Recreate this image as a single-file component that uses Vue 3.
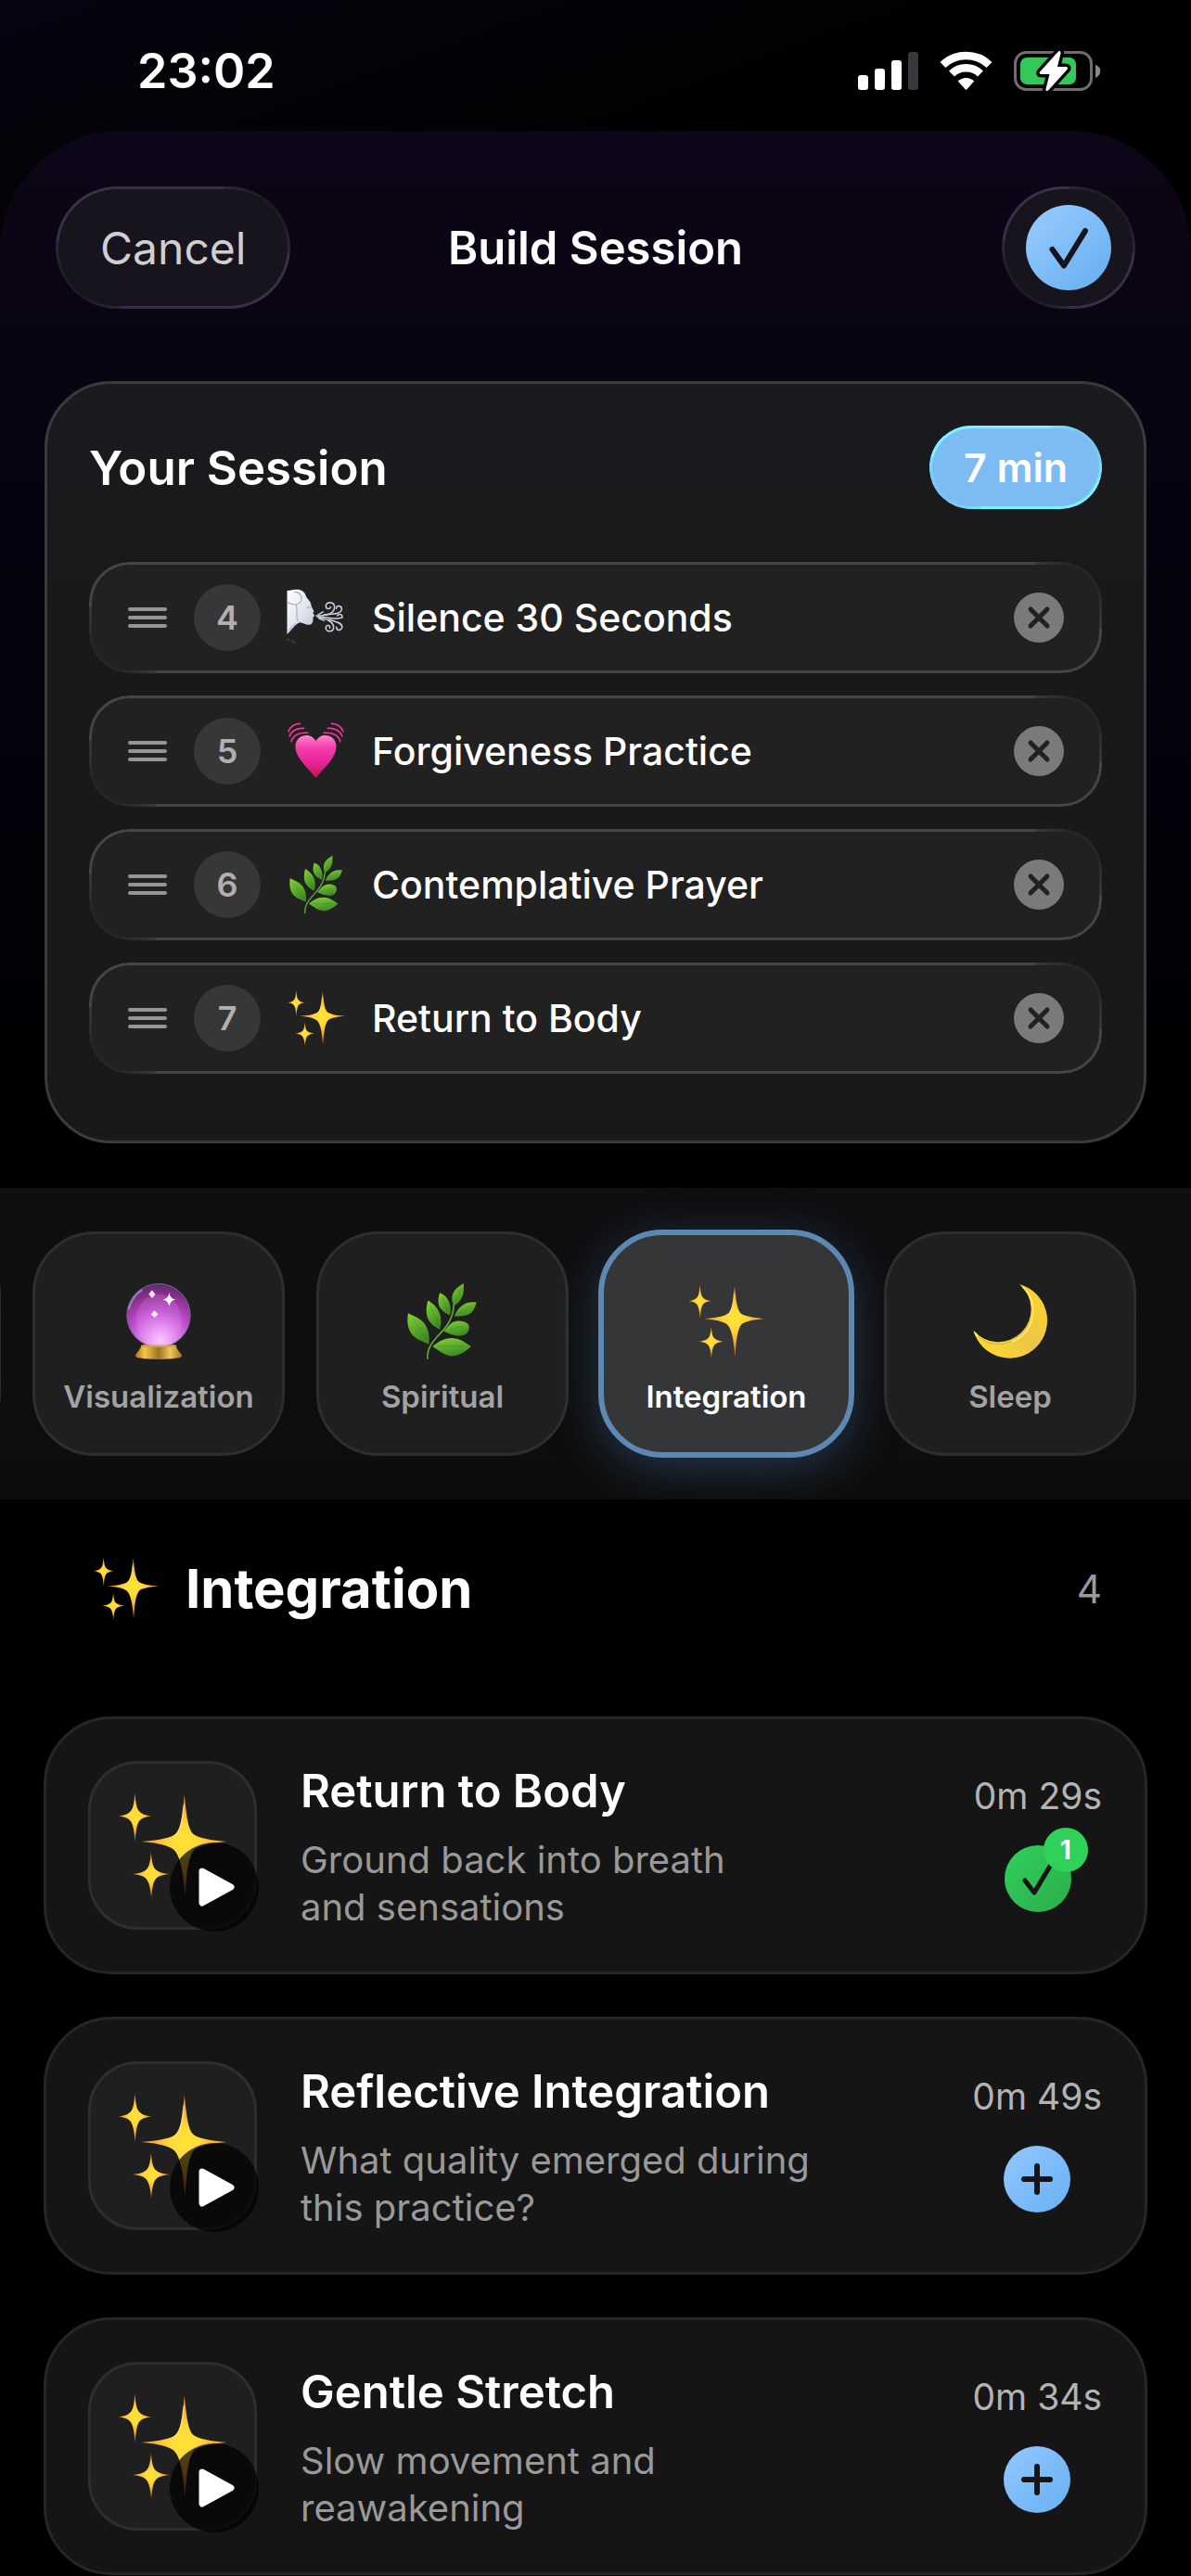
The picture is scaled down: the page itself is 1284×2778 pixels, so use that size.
<script setup>
import { ref, computed } from 'vue'

const session = ref([
  { position: 4, icon: 'wind', title: 'Silence 30 Seconds' },
  { position: 5, icon: 'heart', title: 'Forgiveness Practice' },
  { position: 6, icon: 'herb', title: 'Contemplative Prayer' },
  { position: 7, icon: 'sparkles', title: 'Return to Body' },
])

const categories = [
  { name: 'Visualization', icon: 'crystal' },
  { name: 'Spiritual', icon: 'herb' },
  { name: 'Integration', icon: 'sparkles' },
  { name: 'Sleep', icon: 'moon' },
]
const selected = ref('Integration')
const current = computed(() => categories.find((c) => c.name === selected.value))

const practices = ref([
  { title: 'Return to Body', lines: ['Ground back into breath', 'and sensations'], time: '0m 29s', count: 1 },
  { title: 'Reflective Integration', lines: ['What quality emerged during', 'this practice?'], time: '0m 49s', count: 0 },
  { title: 'Gentle Stretch', lines: ['Slow movement and', 'reawakening'], time: '0m 34s', count: 0 },
])

const removeItem = (index) => {
  session.value.splice(index, 1)
}

const addPractice = (practice) => {
  practice.count++
}
</script>

<template>
  <div class="screen">
    <!-- Shared emoji drawings -->
    <svg class="defs" width="0" height="0" aria-hidden="true">
      <defs>
        <radialGradient id="starFill" gradientUnits="userSpaceOnUse" cx="0" cy="0" r="46">
          <stop offset="0" stop-color="#ffe336" />
          <stop offset="0.3" stop-color="#ffd93a" />
          <stop offset="0.6" stop-color="#f9b038" />
          <stop offset="1" stop-color="#cf6a2c" />
        </radialGradient>
        <linearGradient id="leafFill" x1="0" y1="0" x2="0.4" y2="1">
          <stop offset="0" stop-color="#84d43a" />
          <stop offset="1" stop-color="#3f8c22" />
        </linearGradient>
        <linearGradient id="moonFill" x1="0.2" y1="1" x2="0.9" y2="0.2">
          <stop offset="0" stop-color="#ffd92e" />
          <stop offset="0.5" stop-color="#ecc646" />
          <stop offset="1" stop-color="#fbd02f" />
        </linearGradient>
        <linearGradient id="heartFill" x1="0" y1="0" x2="0" y2="1">
          <stop offset="0" stop-color="#ff86cf" />
          <stop offset="0.3" stop-color="#f43cab" />
          <stop offset="0.65" stop-color="#ea2398" />
          <stop offset="1" stop-color="#c3134f" />
        </linearGradient>
        <radialGradient id="ballFill" cx="0.52" cy="0.9" r="0.95">
          <stop offset="0" stop-color="#ffd2ff" />
          <stop offset="0.25" stop-color="#e48df0" />
          <stop offset="0.5" stop-color="#c04fd0" />
          <stop offset="0.78" stop-color="#8c2f8c" />
          <stop offset="1" stop-color="#4b2a62" />
        </radialGradient>
        <linearGradient id="standFill" x1="0" y1="0" x2="1" y2="0">
          <stop offset="0" stop-color="#b86f1e" />
          <stop offset="0.2" stop-color="#f3c64a" />
          <stop offset="0.5" stop-color="#9c7420" />
          <stop offset="0.75" stop-color="#ecc95c" />
          <stop offset="1" stop-color="#a8701c" />
        </linearGradient>
        <linearGradient id="faceFill" x1="0" y1="0" x2="1" y2="1">
          <stop offset="0" stop-color="#ffffff" />
          <stop offset="0.55" stop-color="#dfe4ee" />
          <stop offset="1" stop-color="#b9c1d4" />
        </linearGradient>
      </defs>
      <symbol id="sparkles" viewBox="0 0 100 100">
        <g fill="url(#starFill)">
          <path transform="translate(60.7 46.6)" d="M0-42C2-23 3-10 9-6 16-2 28-1 38 0 28 1 17 2 10 6 3 12 2 30 .5 49-1 30-3 13-10 7-17 2-28 1-38.700 0-28-1-16-2-9-6-3-10-2-23 0-42Z" />
          <path transform="translate(16.2 23.800) scale(.39 .5)" d="M0-42C2-23 4-12 11-8 17-3 28-1 38 0 28 1 17 3 11 8 4 14 2 30 .5 47-1 30-4 14-11 8-17 3-28 1-38 0-28-1-17-3-11-8-4-12-2-23 0-42Z" />
          <path transform="translate(30.7 75.900) scale(.44 .45)" d="M0-43C2-23 4-12 11-8 17-3 28-1 38 0 28 1 17 3 11 8 4 14 2 30 .5 48-1 30-4 14-11 8-17 3-28 1-38 0-28-1-17-3-11-8-4-12-2-23 0-43Z" />
        </g>
        <path d="M60 14C59 30 57 38 51 42" fill="none" stroke="#fff3b0" stroke-opacity=".45" stroke-width="1.500" />
      </symbol>
      <symbol id="herb" viewBox="0 0 80 86">
        <g fill="url(#leafFill)">
          <path d="M63.500 1C56 5 51 10 50.500 17 50.500 21 51.500 24 52.500 26 58 22 62 18 63 12 63.500 8 63.500 4 63.500 1Z" />
          <path d="M37 11.500C35 18 34.500 24 38 29 41 33 45 35 48.500 36 49.500 30 49 24 46 19 44 15 41 13 37 11.500Z" />
          <path d="M24 20C22 27 21 35 25 42 28 47 33 50 37 52 39 45 39 38 36 32 33 26 29 23 24 20Z" />
          <path d="M2 34C1 42 1 50 6 57 11 63 18 65 25 68 26 60 25 52 20 45 15 39 8 37 2 34Z" />
          <path d="M77.500 22C70 21 64 23 60 27 57 30 55 33 53 37 60 38 67 37 71 34 75 31 76 27 77.500 22Z" />
          <path d="M41.500 54C46 49 49 43 57 42.500 64 42 70 45 69.500 50 69 55 66 59 59 59 52 59 47 56 41.500 54Z" />
          <path d="M29 70.700C36 65 43 61 51 61.500 60 62 66 67 71.500 70.700 66 76 59 81 51 81.300 42 81 36 75 29 70.700Z" />
        </g>
        <path d="M23.500 84C23 72 29 66 35 59 44 50 52 40 52.500 25" fill="none" stroke="#63a83a" stroke-width="1.700" stroke-linecap="round" />
        <path d="M34 70.500H64M8 41 23 64M27 26 36 49M40 17 47 33M60 8 53 23M72 26 56 35M47 53 63 48" fill="none" stroke="#2f7a1c" stroke-opacity=".35" stroke-width="1" />
      </symbol>
      <symbol id="moon" viewBox="0 0 88 88">
        <path d="M54.500 2A42.500 42.500 0 1 1 2.500 54.300 37 37 0 1 0 54.500 2Z" fill="url(#moonFill)" />
        <path d="M3.500 56A37.500 37.500 0 0 0 70 34 37 37 0 0 0 58 5" fill="none" stroke="#fff07a" stroke-width="1.500" />
        <path d="M8 61A37 37 0 0 0 46 67" fill="none" stroke="#9a6c1c" stroke-opacity=".6" stroke-width="1" />
      </symbol>
      <symbol id="crystal" viewBox="0 0 84 86">
        <path d="M23 69H61C62 74 65 76 67.500 80 68 82 66 83 62 83.500 50 85.500 34 85.500 22 83.500 18 83 16 82 16.500 80 19 76 22 74 23 69Z" fill="url(#standFill)" />
        <circle cx="42" cy="36.500" r="35" fill="url(#ballFill)" stroke="#6f6c9c" stroke-width="1" />
        <ellipse cx="42" cy="42" rx="25" ry="29" fill="#e9a0f4" fill-opacity=".18" />
        <path d="M24 69H60L62 71.500H22Z" fill="#d9a640" />
        <path d="M9 30A34 34 0 0 1 24 8" fill="none" stroke="#9298d8" stroke-opacity=".8" stroke-width="2" />
        <path d="M53.700 11C54.500 16 56 18 61 19 56 20 54.500 22 53.700 27 53 22 51 20 46.500 19 51 18 53 16 53.700 11Z" fill="#fff" />
        <path d="M34.500 8.500 38.500 13 35 17.500 31 13ZM37.500 31 41.500 35 37.500 39 33.500 35Z" fill="#ffe3fb" />
      </symbol>
      <symbol id="heart" viewBox="0 0 62 62">
        <path d="M30.500 20.500C27 14 19 13 14 16.500 9 20 8 27 10.500 33 14 42 23 50 30.500 59 38 50 47 42 50.500 33 53 27 52 20 47 16.500 42 13 34 14 30.500 20.500Z" fill="url(#heartFill)" />
        <g fill="none" stroke="#f0369f" stroke-width="1.600" stroke-linecap="round">
          <path d="M2 10.500C4 5 8.500 2.500 14 2.300M3 15.500C5 10 11 6.500 18 7.200M5 21C6.500 15 13 11 22 12" />
          <path d="M59 10.500C57 5 52.500 2.500 47 2.300M58 15.500C56 10 50 6.500 43 7.200M56 21C54.500 15 48 11 39 12" />
        </g>
      </symbol>
      <symbol id="wind" viewBox="0 0 62 62">
        <path d="M.5 3C4 3 6 1.500 10 1.800 15 1.500 19 4 20 8 21 11 23 12 24.500 14.500 26 17 25 19 28 23 29 25 27.500 25.500 27.500 27 30 28 29 30 27.500 31 28 35 27 38 24 38.500 20 39 17 36 13.500 36 9 38 5 44 .5 48.500Z" fill="url(#faceFill)" />
        <path d="M8 4C17 5 18 15 11 17 8 18 4 17 1 15M10 18C12 24 9 30 12 35M21 21C22 20 24 20 25 21M11 37C7 38 4 42 2 45" fill="none" stroke="#a3abc0" stroke-width="1.100" />
        <path d="M.5 54.500 3 53.500M5 55 9 57" stroke="#3b3b3d" stroke-width="2" />
        <g fill="none" stroke="#c9cedb" stroke-width="1.500" stroke-linecap="round">
          <path d="M31 29C38 29 50 28 50 20 50 14 41 14 41 19 41 22 45 23 46 20" />
          <path d="M39 28C47 27 57 28 57.500 22 57.500 18 51 18 52 21.500" />
          <path d="M32 30C41 30 49 34 58 31 59 27 54 27 53 29" />
          <path d="M33 31C42 32 50 36 49 42 48 47 40 46 41 41 42 38 46 39 45 42" />
          <path d="M44 33C50 35 58 36 58 41 57 45 52 45 52 41" />
          <path d="M33 28 38 25M34 32 39 34" />
        </g>
      </symbol>
    </svg>

    <div class="status-bar">
      <span class="clock">23:02</span>
      <svg class="status-icons" viewBox="0 0 264 46" width="264" height="46" aria-hidden="true">
        <g fill="#fff">
          <rect x="1" y="27" width="11" height="16" rx="3" />
          <rect x="19" y="20" width="11" height="23" rx="3" />
          <rect x="37" y="11" width="11" height="32" rx="3" />
          <rect x="55" y="2" width="11" height="41" rx="3" fill="#39383d" />
        </g>
        <g fill="none" stroke="#fff">
          <path d="M92.500 16A36.500 36.500 0 0 1 142.500 16" stroke-width="8.500" />
          <path d="M102 25.500A22.500 22.500 0 0 1 133 25.500" stroke-width="8.500" />
        </g>
        <path d="M108.800 33.500A12.500 12.500 0 0 1 126.200 33.500L118.700 42Q117.500 43.300 116.300 42Z" fill="#fff" />
        <rect x="170.500" y="2.500" width="82" height="40" rx="12" fill="none" stroke="#6e6e71" stroke-width="3" />
        <rect x="176" y="8" width="60" height="29" rx="7" fill="#34c759" />
        <path d="M257 16C264 18 264 27 257 30Z" fill="#8a8a8d" />
        <path d="M216.500 2C218 0 220 1 219.500 3.500L216 18H225C227 18 227.500 19.500 226.500 21L206.500 43C205 45 203 44 203.500 42L207.500 26H198.500C196.500 26 196 24.500 197.500 23Z" fill="#fff" stroke="#04030a" stroke-width="7" stroke-linejoin="round" paint-order="stroke" />
      </svg>
    </div>

    <main class="sheet">
      <header class="top-bar">
        <button type="button" class="cancel glass">Cancel</button>
        <h1>Build Session</h1>
        <button type="button" class="confirm glass" aria-label="Save session">
          <span class="confirm-dot">
            <svg viewBox="0 0 92 92" width="92" height="92" aria-hidden="true">
              <path d="M28.500 48 41 65.500 64 28" fill="none" stroke="#17141d" stroke-width="6" stroke-linecap="round" stroke-linejoin="round" />
            </svg>
          </span>
        </button>
      </header>

      <section class="session">
        <div class="session-head">
          <h2>Your Session</h2>
          <span class="duration glass">7 min</span>
        </div>
        <ul class="session-list">
          <li v-for="(item, index) in session" :key="item.position" class="row glass">
            <svg class="handle" viewBox="0 0 44 28" width="44" height="28" aria-hidden="true">
              <path d="M3 5H41M3 14H41M3 23H41" stroke="#969696" stroke-width="4" stroke-linecap="round" />
            </svg>
            <span class="position">{{ item.position }}</span>
            <svg class="row-icon" aria-hidden="true"><use :href="'#' + item.icon" /></svg>
            <span class="row-title">{{ item.title }}</span>
            <button type="button" class="remove" :aria-label="'Remove ' + item.title" @click="removeItem(index)">
              <svg viewBox="0 0 54 54" width="54" height="54" aria-hidden="true">
                <path d="M18 18 36 36M36 18 18 36" stroke="#212121" stroke-width="5" stroke-linecap="round" />
              </svg>
            </button>
          </li>
        </ul>
      </section>

      <nav class="categories" aria-label="Categories">
        <span class="category" aria-hidden="true"></span>
        <button
          v-for="category in categories"
          :key="category.name"
          type="button"
          class="category"
          :class="{ active: category.name === selected }"
          @click="selected = category.name"
        >
          <svg class="category-icon" aria-hidden="true"><use :href="'#' + category.icon" /></svg>
          <span>{{ category.name }}</span>
        </button>
      </nav>

      <section class="library">
        <div class="library-head">
          <svg class="library-icon" aria-hidden="true"><use :href="'#' + current.icon" /></svg>
          <h2>{{ current.name }}</h2>
          <span class="total">4</span>
        </div>

        <article v-for="practice in practices" :key="practice.title" class="practice">
          <div class="thumb">
            <svg class="thumb-icon" aria-hidden="true"><use href="#sparkles" /></svg>
            <button type="button" class="play" :aria-label="'Play ' + practice.title">
              <svg viewBox="0 0 96 96" width="96" height="96" aria-hidden="true">
                <path d="M35 31 66 48 35 65Z" fill="#fff" stroke="#fff" stroke-width="7" stroke-linejoin="round" />
              </svg>
            </button>
          </div>
          <div class="practice-text">
            <h3>{{ practice.title }}</h3>
            <p><span v-for="line in practice.lines" :key="line">{{ line }}</span></p>
          </div>
          <div class="practice-side">
            <span class="time">{{ practice.time }}</span>
            <button
              type="button"
              class="add"
              :class="{ added: practice.count > 0 }"
              :aria-label="'Add ' + practice.title"
              @click="addPractice(practice)"
            >
              <svg viewBox="0 0 72 72" width="72" height="72" aria-hidden="true">
                <path v-if="practice.count > 0" d="M22 38 32 51 50 21" fill="none" stroke="#151515" stroke-width="5" stroke-linecap="round" stroke-linejoin="round" />
                <path v-else d="M36 22V50M22 36H50" fill="none" stroke="#151515" stroke-width="6" stroke-linecap="round" />
              </svg>
              <span v-if="practice.count > 0" class="count">{{ practice.count }}</span>
            </button>
          </div>
        </article>
      </section>
    </main>
  </div>
</template>

<style>
body {
  margin: 0;
  background: #000;
}
</style>

<style scoped>
* {
  box-sizing: border-box;
}

.screen {
  min-height: 100vh;
  overflow: hidden;
  background: linear-gradient(160deg, #070312 0, #040309 160px, #000 420px);
  color: #fff;
  font-family: Inter, "Liberation Sans", sans-serif;
}

.defs {
  position: absolute;
}

h1,
h2,
h3,
p,
ul {
  margin: 0;
  padding: 0;
}

button {
  padding: 0;
  border: none;
  color: inherit;
  font-family: inherit;
  cursor: pointer;
}

button svg {
  display: block;
}

/* Thin highlight that fades out on two opposite corners */
.glass {
  --edge: #454547;
  --edge-soft: #262626;
  --fade: 72px;
  position: relative;
}

.glass::before {
  content: '';
  position: absolute;
  inset: 0;
  padding: 3px;
  border-radius: inherit;
  background:
    radial-gradient(circle at 100% 0, var(--edge-soft) 30%, transparent) 100% 0 / var(--fade) var(--fade) no-repeat,
    radial-gradient(circle at 0 100%, var(--edge-soft) 30%, transparent) 0 100% / var(--fade) var(--fade) no-repeat,
    var(--edge);
  mask: linear-gradient(#000 0 0) content-box exclude, linear-gradient(#000 0 0);
  pointer-events: none;
}

/* Status bar */
.status-bar {
  display: flex;
  align-items: center;
  justify-content: space-between;
  height: 141px;
  padding: 12px 96px 0 148px;
}

.clock {
  font-size: 52px;
  font-weight: 600;
}

/* Sheet */
.sheet {
  border-radius: 130px 130px 0 0;
  background: linear-gradient(#0b0618 0, #0d0516 80px, #080411 260px, #060310 400px, #020108 800px, #000 1100px);
}

.top-bar {
  display: grid;
  grid-template-columns: 1fr auto 1fr;
  align-items: center;
  padding: 60px 60px 78px;
}

.top-bar h1 {
  font-size: 49px;
  font-weight: 600;
}

.top-bar .glass {
  --edge: #383049;
  --edge-soft: #1d1926;
  height: 132px;
  border-radius: 66px;
  background: #17141d;
}

.cancel {
  justify-self: start;
  padding: 0 48px;
  color: #cfced1;
  font-size: 48px;
}

.confirm {
  display: flex;
  align-items: center;
  justify-content: center;
  justify-self: end;
  width: 144px;
}

.confirm-dot {
  border-radius: 50%;
  background: linear-gradient(135deg, #9accff, #64aeef);
}

/* Your session */
.session {
  margin: 0 48px 48px;
  padding: 45px 45px 72px;
  border: 3px solid #3b3b3f;
  border-radius: 72px;
  background: linear-gradient(#1b1a1f, #19191a 30%, #191919);
}

.session-head {
  display: flex;
  align-items: center;
  justify-content: space-between;
  margin-bottom: 57px;
}

.session-head h2 {
  font-size: 51px;
  font-weight: 600;
}

.duration {
  --edge: #78f4ff;
  --edge-soft: #7cc6f6;
  --fade: 56px;
  padding: 0 37px;
  border-radius: 45px;
  background: #7dbcf2;
  font-size: 43px;
  font-weight: 600;
  line-height: 90px;
}

.session-list {
  display: flex;
  flex-direction: column;
  gap: 24px;
  list-style: none;
}

.row {
  display: flex;
  align-items: center;
  gap: 28px;
  height: 120px;
  padding: 0 41px;
  border-radius: 44px;
  background: #212121;
}

.position {
  width: 72px;
  border-radius: 50%;
  background: #373737;
  color: #b0b0b0;
  font-size: 36px;
  font-weight: 600;
  line-height: 72px;
  text-align: center;
}

.row-icon {
  width: 64px;
  height: 64px;
}

.row-title {
  flex: 1;
  font-size: 41px;
  font-weight: 500;
}

.remove {
  border-radius: 50%;
  background: #7a7a7a;
}

/* Category strip */
.categories {
  display: flex;
  justify-content: flex-end;
  gap: 36px;
  padding: 48px 60px;
  overflow: hidden;
  background: linear-gradient(#0f0f11, #0d0d0d);
}

.category {
  display: flex;
  flex: 0 0 270px;
  flex-direction: column;
  align-items: center;
  gap: 18px;
  height: 240px;
  padding-top: 54px;
  border-radius: 66px;
  background: #1f1f1f;
  color: #a3a3a3;
  font-size: 33px;
  font-weight: 600;
  line-height: 42px;
  outline: 3px solid #2e2e2f;
  outline-offset: -2px;
}

.category.active {
  background: #353637;
  color: #fff;
  outline: 6px solid #5c88b2;
  outline-offset: -3px;
  box-shadow: 0 12px 54px rgba(84, 138, 204, 0.36);
}

.category-icon {
  width: 84px;
  height: 84px;
}

/* Practices */
.library {
  padding: 60px 48px 0;
}

.library-head {
  display: flex;
  align-items: center;
  gap: 28px;
  margin-bottom: 103px;
  padding: 0 48px 0 52px;
}

.library-icon {
  width: 72px;
  height: 72px;
}

.library-head h2 {
  flex: 1;
  font-size: 58px;
  font-weight: 700;
  line-height: 72px;
}

.total {
  color: #999;
  font-size: 42px;
}

.practice {
  display: flex;
  align-items: center;
  gap: 48px;
  height: 276px;
  padding: 0 48px;
  border-radius: 72px;
  background: #151515;
  outline: 3px solid #262626;
  outline-offset: -2px;
}

.practice + .practice {
  margin-top: 48px;
}

.thumb {
  position: relative;
  display: flex;
  align-items: center;
  justify-content: center;
  width: 180px;
  height: 180px;
  border-radius: 52px;
  background: #1f1f1f;
  outline: 3px solid #2e2e2e;
  outline-offset: -2px;
}

.thumb-icon {
  width: 120px;
  height: 120px;
}

.play {
  position: absolute;
  right: -3px;
  bottom: -3px;
  border-radius: 50%;
  background: rgba(0, 0, 0, 0.7);
}

.practice-text {
  flex: 1;
  padding-top: 3px;
}

.practice-text h3 {
  margin-bottom: 18px;
  font-size: 49px;
  font-weight: 600;
  line-height: 60px;
}

.practice-text p {
  color: #999;
  font-size: 40px;
  line-height: 51px;
}

.practice-text p span {
  display: block;
}

.practice-side {
  display: flex;
  flex-direction: column;
  align-items: center;
  gap: 28px;
  padding-bottom: 6px;
}

.time {
  color: #b3b3b3;
  font-size: 39px;
  line-height: 50px;
}

.add {
  position: relative;
  border-radius: 50%;
  background: linear-gradient(135deg, #94c8ff, #67b0f2);
}

.add.added {
  background: linear-gradient(135deg, #31d15a, #2bab4c);
}

.count {
  position: absolute;
  top: -19px;
  right: -18px;
  width: 48px;
  border-radius: 50%;
  background: #30d158;
  color: #fff;
  font-size: 28px;
  font-weight: 700;
  line-height: 48px;
  text-align: center;
}
</style>
